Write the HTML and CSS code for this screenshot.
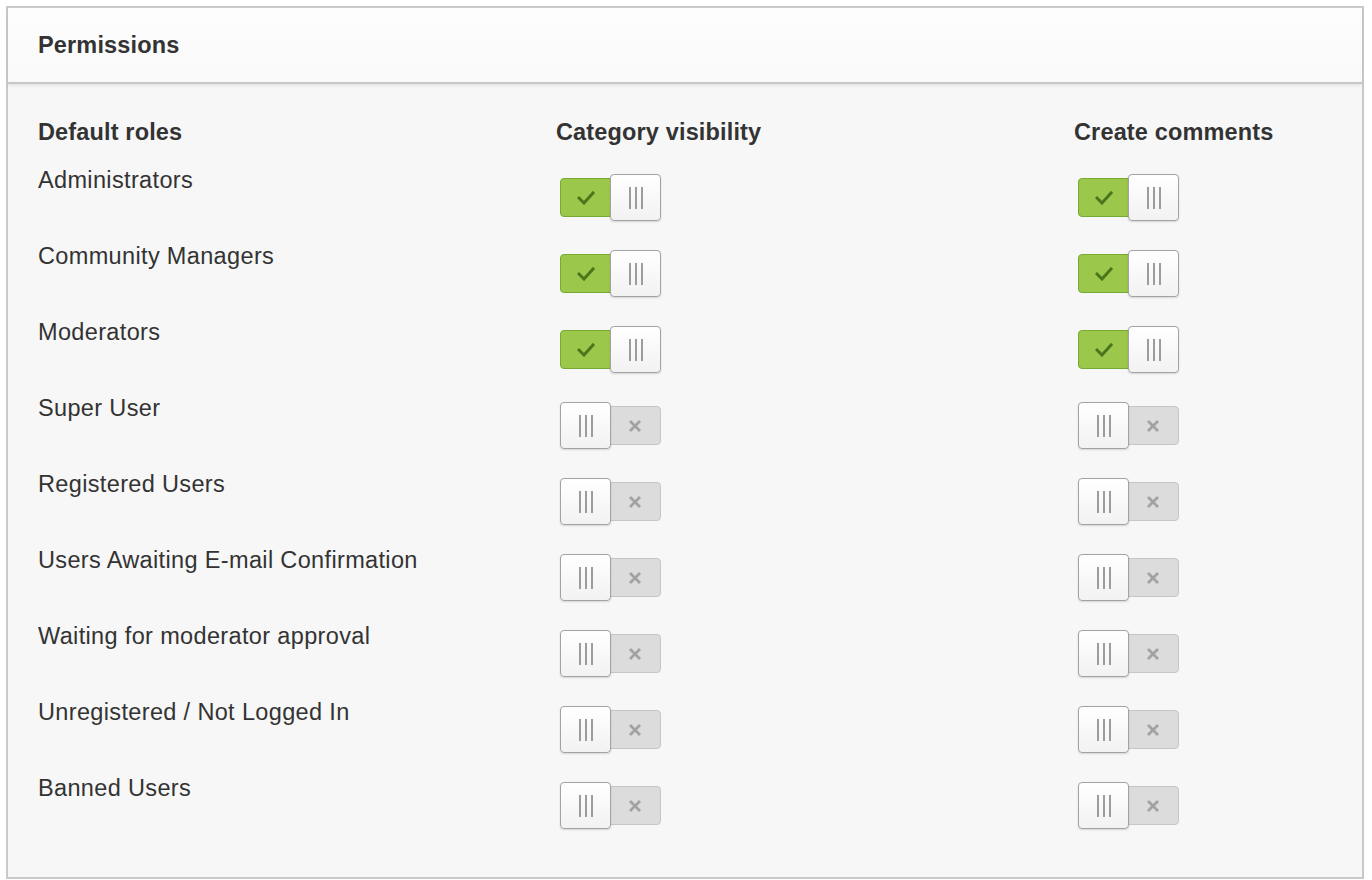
FILE: index.html
```html
<!DOCTYPE html>
<html lang="en">
<head>
<meta charset="utf-8">
<title>Permissions</title>
<link rel="stylesheet" href="styles.css">
</head>
<body>
<div class="panel">
  <div class="panel-header"><h2 class="panel-title">Permissions</h2></div>
  <div class="panel-body">
    <div class="perm-row perm-head">
      <div class="col-label">Default roles</div>
      <div class="col-label">Category visibility</div>
      <div class="col-label">Create comments</div>
    </div>
    <div id="rows"></div>
  </div>
</div>
<script src="app.js"></script>
</body>
</html>
```

FILE: styles.css
```css
* { box-sizing: border-box; }
html, body { margin: 0; padding: 0; background: #ffffff; }
body {
  font-family: "Liberation Sans", Arial, Helvetica, sans-serif;
  color: #333333;
}
.panel {
  margin: 6px;
  width: 1358px;
  height: 873px;
  border: 2px solid #c9c9c9;
  background: #f7f7f7;
  display: flex;
  flex-direction: column;
}
.panel-header {
  height: 76px;
  padding: 23px 30px;
  background: linear-gradient(#fdfdfd, #f9f9f9);
  border-bottom: 2px solid #c8c8c8;
  box-shadow: 0 2px 3px rgba(0,0,0,0.07);
}
.panel-title {
  margin: 0;
  font-size: 23.5px;
  line-height: 28px;
  font-weight: bold;
  letter-spacing: 0.15px;
  color: #333;
}
.panel-body {
  padding: 34px 30px 0 30px;
}
.perm-row {
  display: grid;
  grid-template-columns: 518px 518px 1fr;
  height: 76px;
  align-items: start;
}
.perm-head { height: 48px; }
.col-label {
  font-size: 23.5px;
  line-height: 28px;
  font-weight: bold;
  letter-spacing: 0.15px;
  color: #333;
}
.role {
  font-size: 23.5px;
  line-height: 28px;
  letter-spacing: 0.35px;
  color: #333;
}
.cell { padding: 12px 0 0 4px; }
.switch {
  position: relative;
  width: 101px;
  height: 39px;
  border-radius: 4px;
}
.switch.on {
  background: #9bc84a;
  border: 1px solid #77a830;
}
.switch.off {
  background: #dcdcdc;
  border: 1px solid #c6c6c6;
}
.half {
  position: absolute;
  top: 0;
  bottom: 0;
  width: 50px;
  display: flex;
  align-items: center;
  justify-content: center;
}
.half.left { left: 0; }
.half.right { right: 0; }
.knob {
  position: absolute;
  top: -5px;
  width: 51px;
  height: 47px;
  border: 1px solid #a3a3a3;
  border-radius: 4px;
  background: linear-gradient(#ffffff, #f2f2f2);
  box-shadow: 0 1px 2px rgba(0,0,0,0.14);
  display: flex;
  align-items: center;
  justify-content: center;
  gap: 4px;
}
.switch.on .knob { right: -1px; }
.switch.off .knob { left: -1px; }
.grip {
  width: 2px;
  height: 22px;
  background: #9c9c9c;
}
.icon { display: block; }
```

FILE: app.js
```js
var roles = [
  ["Administrators", true, true],
  ["Community Managers", true, true],
  ["Moderators", true, true],
  ["Super User", false, false],
  ["Registered Users", false, false],
  ["Users Awaiting E-mail Confirmation", false, false],
  ["Waiting for moderator approval", false, false],
  ["Unregistered / Not Logged In", false, false],
  ["Banned Users", false, false]
];
var check = '<svg class="icon" width="18" height="14" viewBox="0 0 18 14"><polyline points="2,7 7,12 16,2" fill="none" stroke="#4a761c" stroke-width="3" stroke-linecap="square"/></svg>';
var cross = '<svg class="icon" width="14" height="14" viewBox="0 0 14 14"><path d="M2 2 L12 12 M12 2 L2 12" fill="none" stroke="#a2a2a2" stroke-width="2.8"/></svg>';
var knob = '<div class="knob"><span class="grip"></span><span class="grip"></span><span class="grip"></span></div>';
function sw(on) {
  if (on) {
    return '<div class="switch on"><div class="half left">' + check + '</div>' + knob + '</div>';
  }
  return '<div class="switch off"><div class="half right">' + cross + '</div>' + knob + '</div>';
}
var html = '';
roles.forEach(function (r) {
  html += '<div class="perm-row"><div class="role">' + r[0] + '</div>' +
    '<div class="cell">' + sw(r[1]) + '</div>' +
    '<div class="cell">' + sw(r[2]) + '</div></div>';
});
document.getElementById('rows').innerHTML = html;
```
